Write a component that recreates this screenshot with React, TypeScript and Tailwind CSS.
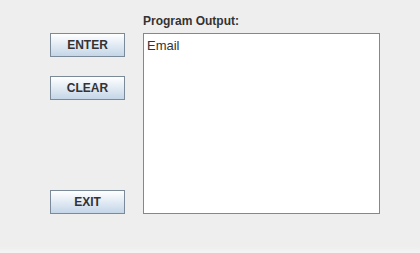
import React from 'react';

const SwingButton = ({ label, className = '' }: { label: string; className?: string }) => (
  <button
    className={`w-[75px] h-[24px] border border-[#7a8a99] bg-gradient-to-b from-white to-[#c4d6e8] text-[12px] font-bold text-[#333333] ${className}`}
  >
    {label}
  </button>
);

const App = () => {
  return (
    <div
      className="w-[420px] h-[253px] bg-[#eeeeee] flex flex-col"
      style={{ fontFamily: '"Liberation Sans", Arial, sans-serif' }}
    >
      <div className="flex flex-1 pl-[50px] pt-[14px]">
        {/* Buttons */}
        <div className="flex flex-col pt-[19px]">
          <SwingButton label="ENTER" />
          <SwingButton label="CLEAR" className="mt-[19px]" />
          <SwingButton label="EXIT" className="mt-[90px]" />
        </div>

        {/* Output */}
        <div className="flex flex-col ml-[18px]">
          <div className="h-[19px] text-[12px] font-bold text-[#333333] leading-[14px]">Program Output:</div>
          <div className="w-[237px] h-[181px] bg-white border border-[#7a8a99] px-[3px] pt-[5px] text-[13px] text-[#333333] leading-[14px]">
            Email
          </div>
        </div>
      </div>
      <div className="h-[6px] bg-gradient-to-b from-[#eeeeee] to-[#f4f4f4]" />
    </div>
  );
};

export default App;
